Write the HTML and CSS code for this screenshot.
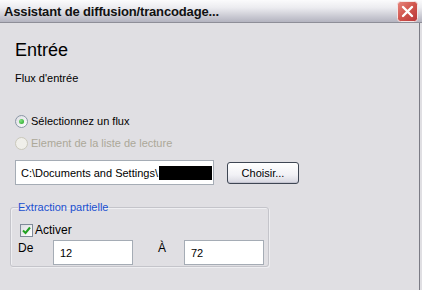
FILE: index.html
```html
<!DOCTYPE html>
<html lang="fr">
<head>
  <meta charset="UTF-8" />
  <meta name="viewport" content="width=device-width, initial-scale=1.0" />
  <title>Assistant de diffusion/trancodage</title>
  <link rel="stylesheet" href="styles.css">
</head>
<body>

  <div class="window">
    <!-- Title bar -->
    <div class="titlebar">
      <span class="title">Assistant de diffusion/trancodage...</span>
      <span class="close">
        <svg width="21" height="21" viewBox="0 0 21 21">
          <defs>
            <linearGradient id="red" x1="0" y1="0" x2="1" y2="1">
              <stop offset="0" stop-color="#e8877f"/>
              <stop offset="0.5" stop-color="#d0544c"/>
              <stop offset="1" stop-color="#b8363a"/>
            </linearGradient>
          </defs>
          <rect x="0.5" y="0.5" width="20" height="20" rx="3" fill="url(#red)" stroke="#f4e6e6"/>
          <path d="M6 6 L15 15 M15 6 L6 15" stroke="#fff" stroke-width="2.4" stroke-linecap="round"/>
        </svg>
      </span>
    </div>

    <!-- Page content -->
    <div class="content">
      <h1 class="heading">Entrée</h1>
      <p class="subheading">Flux d'entrée</p>

      <div class="choices">
        <label class="choice">
          <span class="radio checked"></span>
          Sélectionnez un flux
        </label>
        <label class="choice disabled">
          <span class="radio"></span>
          Element de la liste de lecture
        </label>
      </div>

      <div class="path-row">
        <div class="textbox path">C:\Documents and Settings\<span class="hidden-part"></span></div>
        <button class="button">Choisir...</button>
      </div>

      <fieldset class="group">
        <legend>Extraction partielle</legend>
        <label class="check-row">
          <span class="checkbox">
            <svg width="9" height="9" viewBox="0 0 9 9">
              <path d="M1 4.5 L3.5 7 L8 1.5" fill="none" stroke="#21a121" stroke-width="2"/>
            </svg>
          </span>
          Activer
        </label>
        <div class="range">
          <span class="range-label">De</span>
          <div class="textbox">12</div>
          <span class="range-label to">À</span>
          <div class="textbox">72</div>
        </div>
      </fieldset>
    </div>
  </div>

</body>
</html>
```

FILE: styles.css
```css
body {
  margin: 0;
  background: #e0dfe3;
  font-family: "Liberation Sans", Arial, sans-serif;
  font-size: 11px;
  color: #000;
}

/* Window frame */
.window {
  width: 422px;
  height: 290px;
  overflow: hidden;
}

/* Title bar */
.titlebar {
  height: 22px;
  display: flex;
  align-items: center;
  justify-content: space-between;
  padding: 0 4px 0 4px;
  background: linear-gradient(#fbfbfc, #ececf0 35%, #c9c9d2 75%, #b4b4c0);
  border-bottom: 1px solid #8e8e98;
}

.title {
  font-size: 13px;
  font-weight: bold;
  letter-spacing: -0.15px;
  color: #111;
}

.close {
  display: flex;
  margin-top: 1px;
}

/* Content area */
.content {
  width: 404px;
  height: 267px;
  padding-left: 15px;
  border-right: 1px solid #7b7b85;
}

.heading {
  margin: 0;
  padding-top: 17px;
  font-size: 18px;
  font-weight: normal;
  line-height: 21px;
}

.subheading {
  margin: 11px 0 0 0;
  line-height: 13px;
}

/* Radio choices */
.choices {
  display: flex;
  flex-direction: column;
  gap: 8px;
  margin-top: 29px;
}

.choice {
  display: flex;
  align-items: center;
  gap: 3px;
  height: 14px;
}

.choice.disabled {
  color: #aca899;
}

.radio {
  width: 11px;
  height: 11px;
  border: 1px solid #8a97a6;
  border-radius: 50%;
  background: linear-gradient(135deg, #dcdce2, #fff);
  display: flex;
  align-items: center;
  justify-content: center;
}

.radio.checked::after {
  content: "";
  width: 5px;
  height: 5px;
  border-radius: 50%;
  background: radial-gradient(circle at 35% 35%, #7fe27f, #21a121);
}

.choice.disabled .radio {
  border-color: #cac8bb;
  background: #f0efea;
}

/* Path row */
.path-row {
  display: flex;
  align-items: center;
  gap: 13px;
  margin-top: 10px;
}

.textbox {
  box-sizing: border-box;
  height: 25px;
  display: flex;
  align-items: center;
  padding-left: 6px;
  background: #fff;
  border: 1px solid #a5acb5;
  white-space: nowrap;
}

.path {
  width: 199px;
  padding-left: 5px;
}

.hidden-part {
  width: 53px;
  height: 14px;
  background: #000;
  margin-left: 1px;
}

.button {
  width: 72px;
  height: 22px;
  padding: 0;
  font: inherit;
  color: #000;
  border: 1px solid #3e4653;
  border-radius: 3px;
  background: linear-gradient(#ffffff, #f1f1f5 60%, #d6d6e0);
  box-shadow: inset 0 -1px 0 #c4c4d0;
}

/* Group box */
.group {
  box-sizing: border-box;
  width: 259px;
  margin: 16px 0 0 -5px;
  padding: 9px 3px 1px 7px;
  border: 1px solid #c4c4ca;
  border-radius: 3px;
  box-shadow: 1px 1px 0 #eeeef1, inset 1px 1px 0 #efeff2;
}

.group legend {
  padding: 0;
  color: #1a4fd0;
  line-height: 13px;
}

.check-row {
  display: flex;
  align-items: center;
  gap: 2px;
  margin-left: 2px;
  height: 14px;
  font-size: 12px;
}

.checkbox {
  width: 11px;
  height: 11px;
  border: 1px solid #7f8a99;
  background: linear-gradient(135deg, #dcdce2, #fff);
  display: flex;
  align-items: center;
  justify-content: center;
}

.range {
  display: grid;
  grid-template-columns: 35px 80px 51px 80px;
  align-items: start;
  margin-top: 3px;
}

.range-label {
  font-size: 12px;
  line-height: 16px;
}

.range-label.to {
  padding-left: 25px;
}
```
